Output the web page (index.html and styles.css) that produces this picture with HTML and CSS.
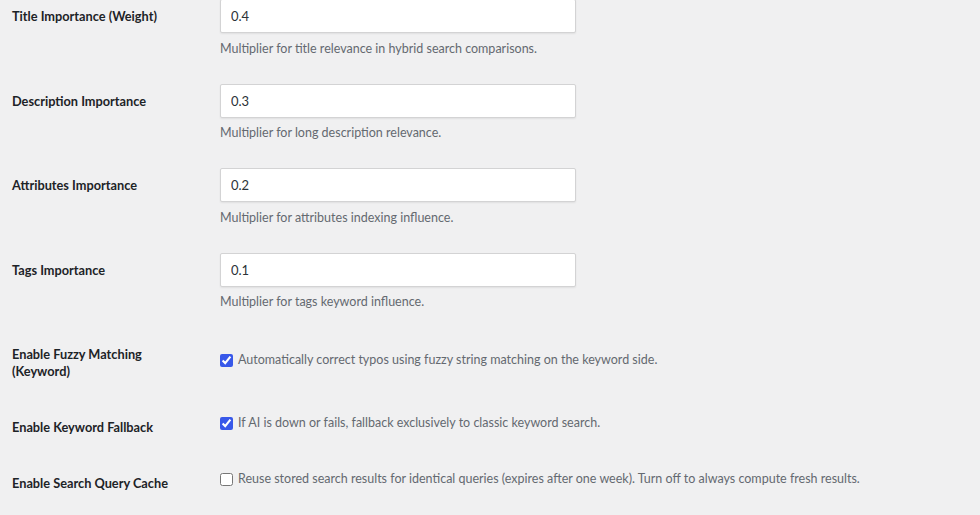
FILE: index.html
```html
<!DOCTYPE html>
<html lang="en">
<head>
<meta charset="utf-8">
<title>Search Settings</title>
<link rel="stylesheet" href="styles.css">
</head>
<body>
<div class="settings">
  <div class="row row-input">
    <div class="label">Title Importance (Weight)</div>
    <div class="field">
      <input class="text" type="text" value="0.4">
      <p class="description">Multiplier for title relevance in hybrid search comparisons.</p>
    </div>
  </div>
  <div class="row row-input">
    <div class="label">Description Importance</div>
    <div class="field">
      <input class="text" type="text" value="0.3">
      <p class="description">Multiplier for long description relevance.</p>
    </div>
  </div>
  <div class="row row-input">
    <div class="label">Attributes Importance</div>
    <div class="field">
      <input class="text" type="text" value="0.2">
      <p class="description">Multiplier for attributes indexing influence.</p>
    </div>
  </div>
  <div class="row row-input">
    <div class="label">Tags Importance</div>
    <div class="field">
      <input class="text" type="text" value="0.1">
      <p class="description">Multiplier for tags keyword influence.</p>
    </div>
  </div>
  <div class="row row-check row-first-check">
    <div class="label">Enable Fuzzy Matching<br>(Keyword)</div>
    <div class="field">
      <label class="check"><input type="checkbox" checked>Automatically correct typos using fuzzy string matching on the keyword side.</label>
    </div>
  </div>
  <div class="row row-check">
    <div class="label">Enable Keyword Fallback</div>
    <div class="field">
      <label class="check"><input type="checkbox" checked>If AI is down or fails, fallback exclusively to classic keyword search.</label>
    </div>
  </div>
  <div class="row row-check">
    <div class="label">Enable Search Query Cache</div>
    <div class="field">
      <label class="check"><input type="checkbox">Reuse stored search results for identical queries (expires after one week). Turn off to always compute fresh results.</label>
    </div>
  </div>
</div>
</body>
</html>
```
FILE: styles.css
```css
html, body {
  margin: 0;
  padding: 0;
  background: #f0f0f1;
}

body {
  font-family: Lato, "Open Sans", sans-serif;
  font-size: 13px;
  color: #3c434a;
  overflow: hidden;
}

.settings {
  margin-top: -16px;
  padding-left: 12px;
}

.row {
  display: grid;
  grid-template-columns: 208px 1fr;
}

.label {
  font-size: 12.75px;
  font-weight: 700;
  color: #1d2327;
  line-height: 16.5px;
}

.row-input {
  height: 84.5px;
}

.row-input .label {
  padding-top: 24px;
}

.row-input .field {
  padding-top: 15px;
}

.row-check .label {
  padding: 24px 0 15.5px;
}

.row-check .field {
  padding-top: 20.5px;
  line-height: 16px;
}

.row-first-check .field {
  padding-top: 30px;
}

.text {
  box-sizing: border-box;
  width: 356px;
  height: 34px;
  margin: 0;
  padding: 0 10px;
  border: 1px solid #d3d3d4;
  border-radius: 2px;
  box-shadow: 0 1px 2px rgba(0, 0, 0, 0.07);
  background: #fff;
  color: #2c3338;
  font: 13px Lato, "Open Sans", sans-serif;
}

.description {
  margin: 6.5px 0 0;
  font-size: 12.5px;
  color: #646970;
  line-height: 17px;
}

.check {
  display: flex;
  align-items: center;
  font-size: 12.5px;
  color: #646970;
}

.check input {
  flex: none;
  width: 13px;
  height: 13px;
  margin: 0 5px 0 0;
  accent-color: #3858e9;
}
```
